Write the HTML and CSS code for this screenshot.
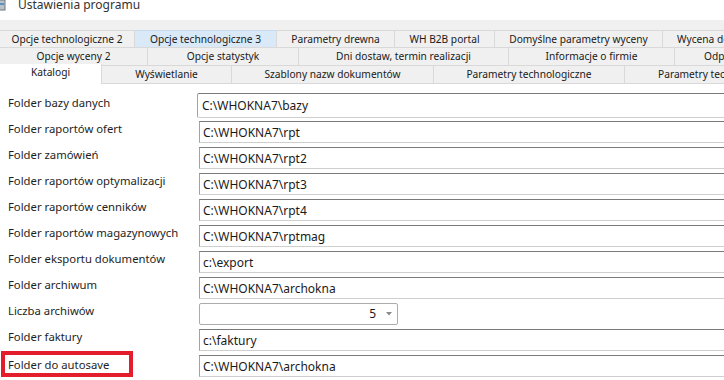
FILE: index.html
```html
<!DOCTYPE html>
<html lang="pl">
<head>
    <meta charset="UTF-8">
    <meta name="viewport" content="width=device-width, initial-scale=1.0">
    <title>Ustawienia programu</title>
    <link rel="stylesheet" href="styles.css">
</head>
<body>

<div class="window">
    <div class="titlebar">
        <svg class="app-icon" width="6" height="11" viewBox="0 0 6 11">
            <rect x="-2" y="0" width="7" height="10" fill="#b9c2c9" stroke="#6d7880" stroke-width="1"/>
            <rect x="0" y="3" width="4" height="2" fill="#5a8fc0"/>
        </svg>
        <span class="title-text">Ustawienia programu</span>
    </div>

    <div class="tabstrip">
        <div class="tab-row row-1">
            <div class="tab">Opcje technologiczne 2</div>
            <div class="tab hover">Opcje technologiczne 3</div>
            <div class="tab">Parametry drewna</div>
            <div class="tab">WH B2B portal</div>
            <div class="tab">Domyślne parametry wyceny</div>
            <div class="tab last">Wycena dodatków</div>
        </div>
        <div class="tab-row row-2">
            <div class="tab">Opcje wyceny 2</div>
            <div class="tab">Opcje statystyk</div>
            <div class="tab">Dni dostaw, termin realizacji</div>
            <div class="tab">Informacje o firmie</div>
            <div class="tab last">Odpady</div>
        </div>
        <div class="tab-row row-3">
            <div class="tab selected">Katalogi</div>
            <div class="tab">Wyświetlanie</div>
            <div class="tab">Szablony nazw dokumentów</div>
            <div class="tab">Parametry technologiczne</div>
            <div class="tab last">Parametry technologiczne 2</div>
        </div>
    </div>

    <div class="page">
        <div class="field-row first">
            <label class="field-label">Folder bazy danych</label>
            <input class="textbox" type="text" value="C:\WHOKNA7\bazy">
        </div>
        <div class="field-row">
            <label class="field-label">Folder raportów ofert</label>
            <input class="textbox" type="text" value="C:\WHOKNA7\rpt">
        </div>
        <div class="field-row">
            <label class="field-label">Folder zamówień</label>
            <input class="textbox" type="text" value="C:\WHOKNA7\rpt2">
        </div>
        <div class="field-row">
            <label class="field-label">Folder raportów optymalizacji</label>
            <input class="textbox" type="text" value="C:\WHOKNA7\rpt3">
        </div>
        <div class="field-row">
            <label class="field-label">Folder raportów cenników</label>
            <input class="textbox" type="text" value="C:\WHOKNA7\rpt4">
        </div>
        <div class="field-row">
            <label class="field-label">Folder raportów magazynowych</label>
            <input class="textbox" type="text" value="C:\WHOKNA7\rptmag">
        </div>
        <div class="field-row">
            <label class="field-label">Folder eksportu dokumentów</label>
            <input class="textbox" type="text" value="c:\export">
        </div>
        <div class="field-row">
            <label class="field-label">Folder archiwum</label>
            <input class="textbox" type="text" value="C:\WHOKNA7\archokna">
        </div>
        <div class="field-row">
            <label class="field-label">Liczba archiwów</label>
            <div class="combo">
                <span class="combo-value">5</span>
                <svg class="combo-arrow" width="6" height="4" viewBox="0 0 6 4">
                    <path d="M0 0 L6 0 L3 3.5 Z" fill="#8a8a8a"/>
                </svg>
            </div>
        </div>
        <div class="field-row">
            <label class="field-label">Folder faktury</label>
            <input class="textbox" type="text" value="c:\faktury">
        </div>
        <div class="field-row">
            <label class="field-label marked">Folder do autosave</label>
            <input class="textbox" type="text" value="C:\WHOKNA7\archokna">
        </div>
    </div>
</div>

</body>
</html>
```

FILE: styles.css
```css
body {
    margin: 0;
    width: 724px;
    height: 380px;
    overflow: hidden;
    background: #fff;
    font-family: "Noto Sans", "Open Sans", Arial, sans-serif;
    font-size: 12px;
    color: #1e1e1e;
}
.window {
    width: 724px;
}

/* title bar */
.titlebar {
    height: 20px;
    display: flex;
    align-items: flex-start;
    background: #fff;
}
.app-icon {
    display: block;
}
.title-text {
    margin-left: 12px;
    line-height: 10px;
    font-size: 12px;
    color: #333;
    white-space: nowrap;
}

/* tabs */
.tabstrip {
    background: #f0f0f0;
    padding-top: 10px;
}
.tab-row {
    display: grid;
    width: 900px;
}
.row-1 {
    grid-template-columns: 135px 142px 118px 100px 168px 170px;
    height: 17px;
}
.row-2 {
    grid-template-columns: 148px 151px 210px 166px 120px;
    height: 18px;
}
.row-3 {
    grid-template-columns: 102px 130px 202px 191px 220px;
    height: 19px;
}
.tab {
    box-sizing: border-box;
    border-top: 1px solid #d9d9d9;
    border-right: 1px solid #d9d9d9;
    background: #f0f0f0;
    font-size: 10.2px;
    line-height: 16px;
    text-align: center;
    white-space: nowrap;
    overflow: hidden;
    color: #1a1a1a;
}
.tab.last {
    text-align: left;
}
.row-1 .tab.last {
    padding-left: 14px;
}
.row-2 .tab.last {
    padding-left: 29px;
}
.row-3 .tab.last {
    padding-left: 33px;
}
.row-3 .tab {
    border-bottom: 1px solid #d9d9d9;
}
.tab.hover {
    background: #d9e9f8;
    border-top-color: #c8dcef;
}
.row-3 .tab.selected {
    background: #fff;
    border-top: none;
    border-bottom: none;
    margin-top: -1px;
    height: 20px;
    line-height: 14px;
    padding-top: 1px;
}

/* form page */
.page {
    padding-top: 9px;
    background: #fff;
}
.field-row {
    display: grid;
    grid-template-columns: 199px 620px;
    height: 26px;
    align-items: start;
}
.field-row.first {
    height: 28px;
}
.field-label {
    padding-left: 8px;
    font-size: 11.3px;
    line-height: 16px;
    white-space: nowrap;
    color: #1e1e1e;
}
.first .field-label {
    padding-top: 2px;
}
.field-label.marked {
    justify-self: start;
    width: 124px;
    margin-left: 5px;
    padding-left: 3px;
    padding-top: 2px;
    box-sizing: border-box;
    height: 18px;
    outline: 4px solid #e31d2b;
}
.textbox {
    box-sizing: border-box;
    height: 22px;
    width: 620px;
    margin: 0;
    padding: 0 3px;
    border: 1px solid;
    border-color: #7a7a7a #c6c6c6 #cfcfcf #a3a3a3;
    border-radius: 0;
    font-family: inherit;
    font-size: 12px;
    line-height: 20px;
    color: #1a1a1a;
    background: #fff;
    outline: none;
}
.first .textbox {
    height: 25px;
    margin-left: -2px;
    width: 622px;
    padding-left: 4px;
    border-radius: 2px;
    line-height: 23px;
}

/* combo box */
.combo {
    box-sizing: border-box;
    width: 199px;
    height: 22px;
    border: 1px solid #acacac;
    border-radius: 2px;
    background: #fff;
    display: flex;
    align-items: center;
    justify-content: flex-end;
    padding-right: 5px;
}
.combo-value {
    font-size: 12px;
    line-height: 20px;
    color: #1a1a1a;
}
.combo-arrow {
    display: block;
    margin-left: 10px;
}
```
